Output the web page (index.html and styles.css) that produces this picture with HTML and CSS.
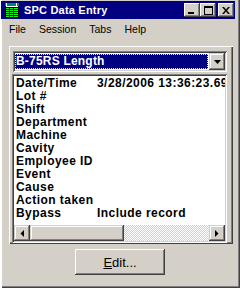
FILE: index.html
```html
<!DOCTYPE html>
<html>
<head>
<meta charset="utf-8">
<link rel="stylesheet" href="styles.css">
</head>
<body>
<div class="window">
  <div class="titlebar">
    <svg class="app-icon" width="16" height="16" viewBox="0 0 16 16">
      <rect x="1" y="1" width="14" height="15" fill="#000"/>
      <rect x="1" y="1" width="14" height="3" fill="#008080"/>
      <rect x="2" y="1" width="1" height="3" fill="#fff"/>
      <rect x="12" y="1" width="1" height="3" fill="#fff"/>
      <rect x="2" y="4" width="12" height="1" fill="#fff"/>
      <rect x="2" y="6" width="12" height="1" fill="#00ff00"/>
      <rect x="2" y="8" width="12" height="1" fill="#00ff00"/>
      <rect x="2" y="10" width="12" height="1" fill="#00ff00"/>
      <rect x="2" y="12" width="12" height="1" fill="#00ff00"/>
      <rect x="2" y="14" width="12" height="1" fill="#00ff00"/>
      <rect x="5" y="5" width="1" height="10" fill="#000"/>
      <rect x="9" y="5" width="1" height="10" fill="#000"/>
    </svg>
    <span class="title-text">SPC Data Entry</span>
    <div class="caption-buttons">
      <div class="cbtn"><svg width="8" height="7" viewBox="0 0 8 7"><rect x="0" y="5" width="6" height="2" fill="#000"/></svg></div>
      <div class="cbtn"><svg width="9" height="9" viewBox="0 0 9 9"><rect x="0.5" y="0.5" width="8" height="8" fill="none" stroke="#000"/><rect x="0" y="0" width="9" height="2" fill="#000"/></svg></div>
      <div class="cbtn close"><svg width="8" height="7" viewBox="0 0 8 7"><path d="M0 0h2l2 2.5L6 0h2L5 3.5 8 7H6L4 4.5 2 7H0l3-3.5z" fill="#000"/></svg></div>
    </div>
  </div>
  <div class="menubar">
    <span class="menu-item">File</span>
    <span class="menu-item">Session</span>
    <span class="menu-item">Tabs</span>
    <span class="menu-item">Help</span>
  </div>
  <div class="panel">
    <div class="combo">
      <div class="combo-field"><span class="combo-sel">B-75RS Length</span></div>
      <div class="combo-btn"><svg width="7" height="4" viewBox="0 0 7 4"><path d="M0 0h7L3.5 4z" fill="#000"/></svg></div>
    </div>
    <div class="listbox">
      <div class="rows">
        <div class="row"><span class="label">Date/Time</span><span class="value">3/28/2006 13:36:23.69</span></div>
        <div class="row"><span class="label">Lot #</span></div>
        <div class="row"><span class="label">Shift</span></div>
        <div class="row"><span class="label">Department</span></div>
        <div class="row"><span class="label">Machine</span></div>
        <div class="row"><span class="label">Cavity</span></div>
        <div class="row"><span class="label">Employee ID</span></div>
        <div class="row"><span class="label">Event</span></div>
        <div class="row"><span class="label">Cause</span></div>
        <div class="row"><span class="label">Action taken</span></div>
        <div class="row"><span class="label">Bypass</span><span class="value">Include record</span></div>
      </div>
      <div class="hscroll">
        <div class="sbtn"><svg width="4" height="7" viewBox="0 0 4 7"><path d="M4 0v7L0.5 3.5z" fill="#000"/></svg></div>
        <div class="thumb"></div>
        <div class="track"></div>
        <div class="sbtn"><svg width="4" height="7" viewBox="0 0 4 7"><path d="M0 0v7l3.5-3.5z" fill="#000"/></svg></div>
      </div>
    </div>
  </div>
  <div class="button-row">
    <div class="push-btn"><span class="accel">E</span>dit...</div>
  </div>
</div>
</body>
</html>
```
FILE: styles.css
```css
* { box-sizing: border-box; }
html, body { margin: 0; padding: 0; }
body { width: 240px; height: 288px; overflow: hidden; background: #d4d0c8; }

.window {
  width: 240px;
  height: 288px;
  background: #d4d0c8;
  display: flex;
  flex-direction: column;
  box-shadow: inset 2px 0 0 #fff, inset -1px -1px 0 #404040, inset -2px -2px 0 #808080, inset -3px 0 0 #d4d0c8;
  font-family: "Liberation Sans", Arial, sans-serif;
}

.titlebar {
  margin: 1px 0 0 1px;
  width: 234px;
  height: 18px;
  background: #000080;
  display: flex;
  align-items: center;
}
.app-icon { margin-left: 3px; flex: none; }
.title-text {
  margin-left: 4px;
  color: #fff;
  font-weight: bold;
  font-size: 11px;
  letter-spacing: 0.2px;
  flex: 1;
  white-space: nowrap;
}
.caption-buttons { display: flex; margin-right: 1px; }
.cbtn {
  width: 16px;
  height: 14px;
  background: #d4d0c8;
  box-shadow: inset -1px -1px 0 #404040, inset 1px 1px 0 #fff, inset -2px -2px 0 #808080;
  display: flex;
  align-items: center;
  justify-content: center;
}
.cbtn.close { margin-left: 2px; }

.menubar {
  height: 19px;
  display: flex;
  align-items: center;
  padding-left: 9px;
  gap: 13px;
  font-size: 10.5px;
  color: #000;
}

.panel {
  margin: 8px 0 0 9px;
  width: 224px;
  height: 198px;
  box-shadow: inset 1px 1px 0 #fff, inset -1px -1px 0 #404040, inset -2px -2px 0 #808080;
  display: flex;
  flex-direction: column;
  padding: 5px 0 0 3px;
}

.combo {
  margin-left: 1px;
  width: 214px;
  height: 21px;
  background: #fff;
  box-shadow: inset 1px 1px 0 #808080, inset -1px -1px 0 #fff, inset 2px 2px 0 #404040, inset -2px -2px 0 #d4d0c8;
  display: flex;
  padding: 2px;
}
.combo-field { flex: 1; padding: 1px 1px 1px 0; }
.combo-sel {
  display: block;
  height: 15px;
  background: #000080;
  outline: 1px dotted #ffff00;
  outline-offset: -1px;
  color: #fff;
  font-weight: bold;
  font-size: 12px;
  letter-spacing: 0.2px;
  line-height: 15px;
  padding-left: 1px;
}
.combo-btn {
  width: 16px;
  height: 17px;
  background: #d4d0c8;
  box-shadow: inset -1px -1px 0 #404040, inset 1px 1px 0 #d4d0c8, inset -2px -2px 0 #808080, inset 2px 2px 0 #fff;
  display: flex;
  align-items: center;
  justify-content: center;
}

.listbox {
  margin-top: 2px;
  width: 215px;
  height: 169px;
  background: #fff;
  box-shadow: inset 1px 1px 0 #808080, inset -1px -1px 0 #fff, inset 2px 2px 0 #404040, inset -2px -2px 0 #d4d0c8;
  padding: 2px;
  display: flex;
  flex-direction: column;
}
.rows { flex: 1; overflow: hidden; padding: 1px 0 0 2px; }
.row {
  display: flex;
  height: 13px;
  font-size: 12px;
  font-weight: bold;
  letter-spacing: 0.45px;
  line-height: 13px;
  white-space: nowrap;
  color: #000;
}
.label { width: 81px; flex: none; }
.value { flex: none; }

.hscroll { height: 16px; display: flex; flex: none; }
.sbtn {
  width: 16px;
  height: 16px;
  background: #d4d0c8;
  box-shadow: inset -1px -1px 0 #404040, inset 1px 1px 0 #d4d0c8, inset -2px -2px 0 #808080, inset 2px 2px 0 #fff;
  display: flex;
  align-items: center;
  justify-content: center;
}
.thumb {
  width: 94px;
  background: #d4d0c8;
  box-shadow: inset -1px -1px 0 #404040, inset 1px 1px 0 #d4d0c8, inset -2px -2px 0 #808080, inset 2px 2px 0 #fff;
}
.track {
  flex: 1;
  background: repeating-conic-gradient(#fff 0 25%, #d4d0c8 0 50%) 0 0 / 2px 2px;
}

.button-row { padding: 5px 0 0 75px; }
.push-btn {
  width: 90px;
  height: 26px;
  background: #d4d0c8;
  box-shadow: inset -1px -1px 0 #404040, inset 1px 1px 0 #fff, inset -2px -2px 0 #808080;
  display: flex;
  align-items: center;
  justify-content: center;
  font-size: 13px;
  color: #000;
}
.accel { text-decoration: underline; }
```
